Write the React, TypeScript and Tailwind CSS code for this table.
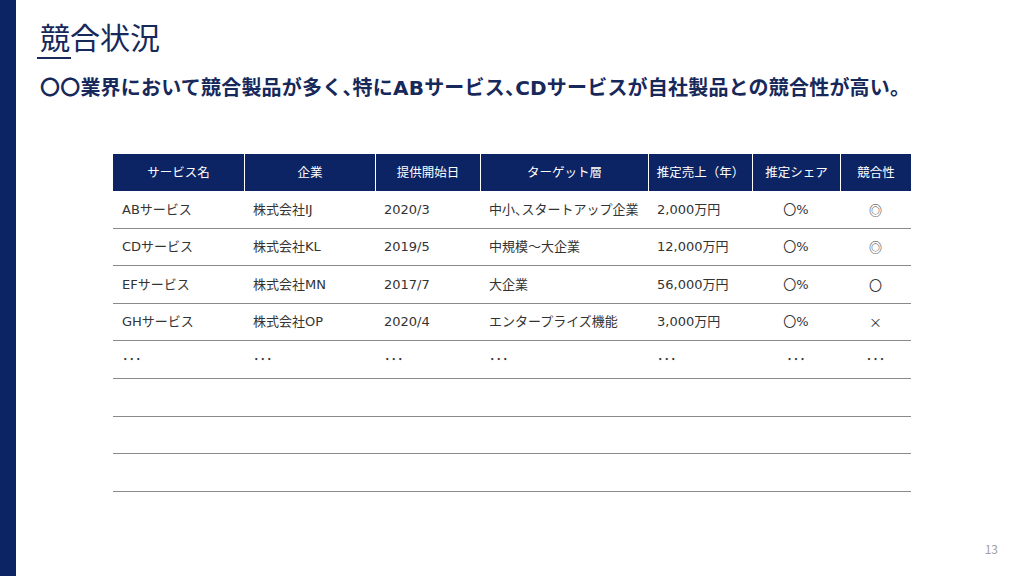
import React from 'react'

const font = { fontFamily: '"DejaVu Sans", "Noto Sans CJK JP", sans-serif' }
const cjk = { fontFamily: '"Noto Sans CJK JP", sans-serif' }

const columns = [
  { label: 'サービス名', width: 'w-[131px]', align: 'left' },
  { label: '企業', width: 'w-[131px]', align: 'left' },
  { label: '提供開始日', width: 'w-[105px]', align: 'left' },
  { label: 'ターゲット層', width: 'w-[168px]', align: 'left' },
  { label: '推定売上（年）', width: 'w-[104px]', align: 'left' },
  { label: '推定シェア', width: 'w-[88px]', align: 'center' },
  { label: '競合性', width: 'w-[71px]', align: 'center' },
]

const rows = [
  ['ABサービス', '株式会社IJ', '2020/3', '中小、スタートアップ企業', '2,000万円', '〇%', '◎'],
  ['CDサービス', '株式会社KL', '2019/5', '中規模～大企業', '12,000万円', '〇%', '◎'],
  ['EFサービス', '株式会社MN', '2017/7', '大企業', '56,000万円', '〇%', '〇'],
  ['GHサービス', '株式会社OP', '2020/4', 'エンタープライズ機能', '3,000万円', '〇%', '×'],
  ['･･･', '･･･', '･･･', '･･･', '･･･', '･･･', '･･･'],
  ['', '', '', '', '', '', ''],
  ['', '', '', '', '', '', ''],
  ['', '', '', '', '', '', ''],
]

// narrow the Japanese comma like the slide does
function Text({ children }: { children: string }) {
  const parts = children.split('、')
  return (
    <>
      {parts.map((p, i) => (
        <React.Fragment key={i}>
          {p}
          {i < parts.length - 1 && <span className="[font-feature-settings:'halt']">、</span>}
        </React.Fragment>
      ))}
    </>
  )
}

export default function App() {
  return (
    <div className="flex w-[1024px] h-[576px] bg-white overflow-hidden" style={font}>
      <div className="w-[16px] h-full bg-[#0c2463] shrink-0" />
      <div className="relative flex-1 flex flex-col">
        <div className="pl-[24px] pt-[17px]">
          <h1 className="text-[30px] leading-[38px] text-[#17285a] font-normal" style={cjk}>競合状況</h1>
          <div className="w-[34px] h-[2px] bg-[#17285a] mt-[2px] -ml-[3px]" />
        </div>
        <p className="pl-[24px] mt-[16px] text-[20px] leading-[26px] font-bold text-[#17285a] tracking-[0.2px] whitespace-nowrap">
          <Text>〇〇業界において競合製品が多く、特にABサービス、CDサービスが自社製品との競合性が高い。</Text>
        </p>
        <div className="ml-[97px] mt-[53px] w-[798px]">
          <div className="flex h-[37px] bg-[#0c2463]">
            {columns.map((c, i) => (
              <div
                key={c.label}
                className={`${c.width} flex items-center justify-center text-white text-[12.5px] ${i > 0 ? 'border-l border-white' : ''}`}
                style={cjk}
              >
                {c.label}
              </div>
            ))}
          </div>
          {rows.map((r, ri) => (
            <div key={ri} className="flex h-[37.6px] border-b-[1.5px] border-[#8a8a8a]">
              {r.map((cell, ci) => (
                <div
                  key={ci}
                  className={`${columns[ci].width} flex items-center text-[13px] text-[#333333] whitespace-nowrap ${
                    columns[ci].align === 'center' ? 'justify-center' : 'pl-[9px]'
                  }`}
                  style={ci === 6 && ri < 4 ? cjk : undefined}
                >
                  <Text>{cell}</Text>
                </div>
              ))}
            </div>
          ))}
        </div>
        <div className="absolute right-[26px] bottom-[18px] text-[12px] text-[#a0a0a0]" style={cjk}>13</div>
      </div>
    </div>
  )
}
